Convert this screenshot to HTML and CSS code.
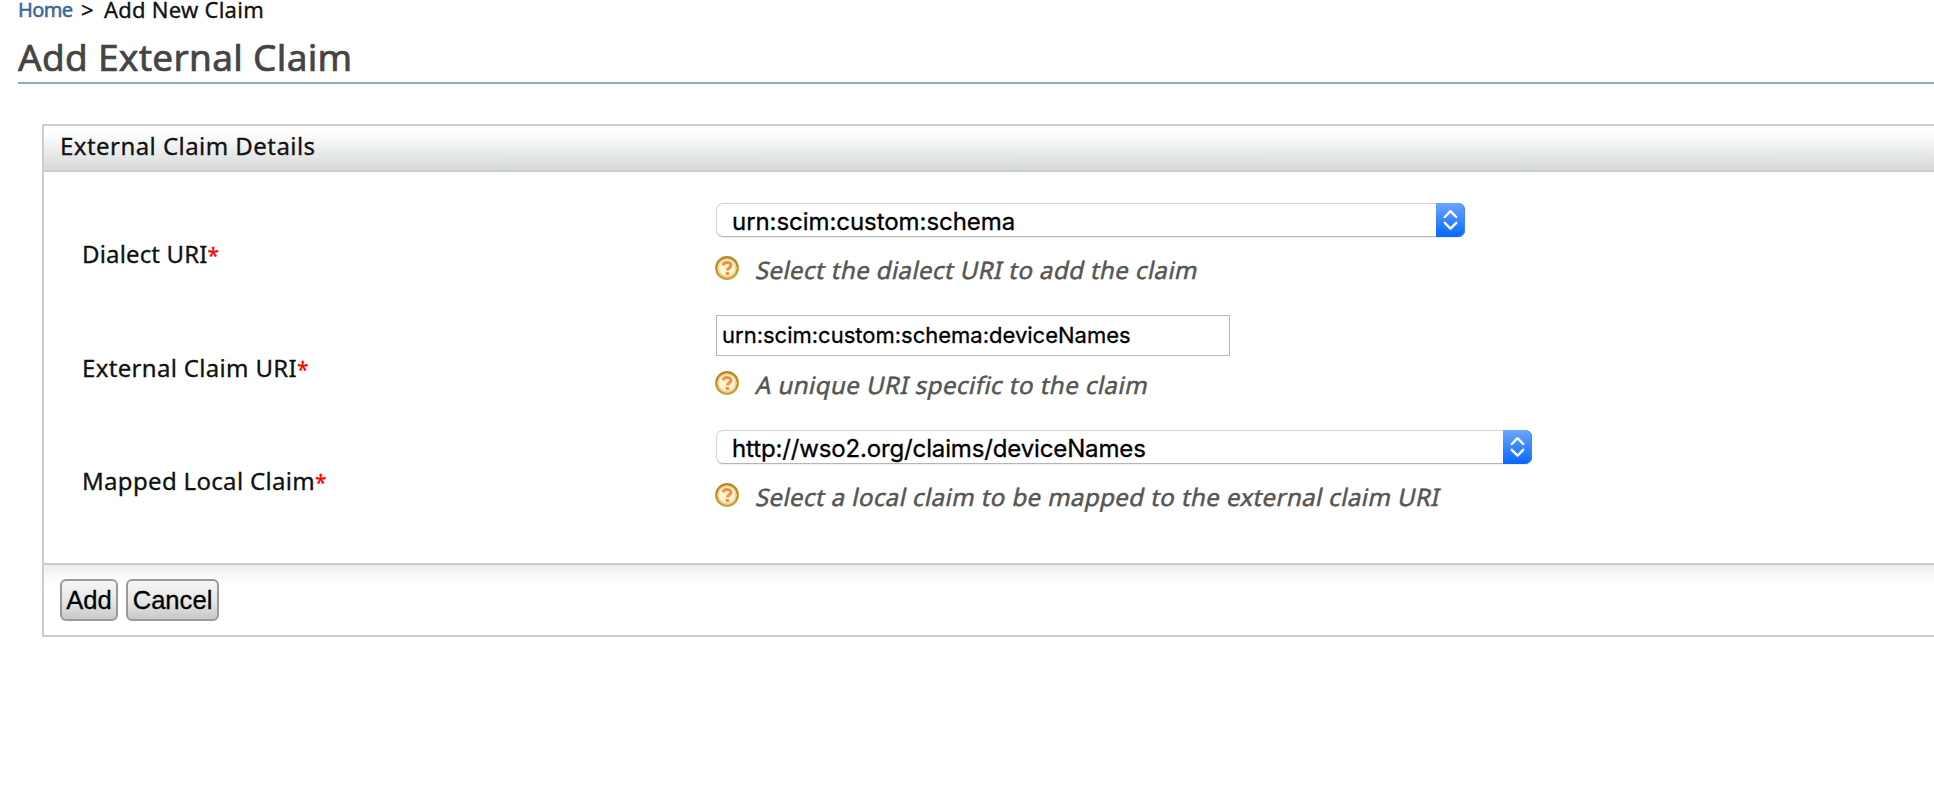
FILE: index.html
```html
<!DOCTYPE html>
<html lang="en">
<head>
<meta charset="utf-8">
<title>Add External Claim</title>
<link rel="stylesheet" href="styles.css">
</head>
<body>
<svg width="0" height="0" class="defs">
  <defs>
    <linearGradient id="ring" x1="0" y1="0" x2="0" y2="1"><stop offset="0" stop-color="#b08c2a"/><stop offset="1" stop-color="#cda03c"/></linearGradient>
    <symbol id="help" viewBox="0 0 24 24">
      <circle cx="12" cy="12" r="10.7" fill="#fcf5d4" stroke="url(#ring)" stroke-width="2.4"/>
      <circle cx="12" cy="12" r="8.8" fill="none" stroke="#ecd28a" stroke-width="1.4"/>
      <path d="M8.2 9.4C8.4 5.8 16 5.6 16 9.3C16 11.8 12.4 11.6 12.4 14.6" fill="none" stroke="#f18f45" stroke-width="3"/>
      <rect x="10.8" y="16" width="3.2" height="3" fill="#f18f45"/>
    </symbol>
    <symbol id="arrows" viewBox="0 0 29 34">
      <path d="M8.8 14L14.5 8.2L20.2 14M8.8 19.8L14.5 25.6L20.2 19.8" fill="none" stroke="#fff" stroke-width="2.4" stroke-linecap="round" stroke-linejoin="round"/>
    </symbol>
  </defs>
</svg>
<nav class="breadcrumb"><a class="home">Home</a><span class="sep">&gt;</span><span class="current">Add New Claim</span></nav>
<h1 class="title"><span>Add External Claim</span></h1>
<main class="panel">
  <h2 class="panel-head"><span class="head-text">External Claim Details</span></h2>
  <div class="panel-body">
    <div class="row row-dialect">
      <div class="label"><span class="l1">Dialect URI</span><span class="req">*</span></div>
      <div class="field">
        <div class="select select-dialect"><span class="value">urn:scim:custom:schema</span><span class="knob"><svg width="29" height="34"><use href="#arrows"/></svg></span></div>
        <div class="hint"><svg class="icon" width="24" height="24"><use href="#help"/></svg><span class="slant">Select the dialect URI to add the claim</span></div>
      </div>
    </div>
    <div class="row row-external">
      <div class="label"><span>External Claim URI</span><span class="req">*</span></div>
      <div class="field">
        <div class="textbox"><span>urn:scim:custom:schema:deviceNames</span></div>
        <div class="hint"><svg class="icon" width="24" height="24"><use href="#help"/></svg><span class="slant">A unique URI specific to the claim</span></div>
      </div>
    </div>
    <div class="row row-mapped">
      <div class="label"><span>Mapped Local Claim</span><span class="req">*</span></div>
      <div class="field">
        <div class="select select-mapped"><span class="value">http://wso2.org/claims/deviceNames</span><span class="knob"><svg width="29" height="34"><use href="#arrows"/></svg></span></div>
        <div class="hint"><svg class="icon" width="24" height="24"><use href="#help"/></svg><span class="slant">Select a local claim to be mapped to the external claim URI</span></div>
      </div>
    </div>
  </div>
  <div class="panel-foot"><button class="btn add">Add</button><button class="btn cancel">Cancel</button></div>
</main>
</body>
</html>
```

FILE: styles.css
```css
* { box-sizing: border-box; }
body { margin: 0; height: 796px; overflow: hidden; background: #fff; color: #111; font-family: "Noto Sans", sans-serif; white-space: nowrap; -webkit-text-stroke: 0.3px; }
.defs { display: block; height: 0; }
.breadcrumb { display: flex; height: 32px; padding-left: 18px; font-size: 22px; line-height: 19px; }
.home { width: 63px; color: #386698; font-size: 20px; letter-spacing: -0.6px; -webkit-text-stroke: 0.5px; }
.sep { width: 23px; }
.current { letter-spacing: 0.25px; }
.title { margin: 0 0 40px 18px; height: 52px; border-bottom: 2px solid #94a6c8; color: #444; font-size: 37px; font-weight: 400; line-height: 50px; letter-spacing: 0.3px; -webkit-text-stroke: 0.7px; }
.panel { margin-left: 42px; height: 513px; border: 2px solid #ccc; border-right: 0; }
.panel-head { margin: 0; height: 46px; padding-left: 16px; border-bottom: 2px solid #ccc; background: linear-gradient(#fff 15%, #d8dbdc 95%); font-size: 24px; font-weight: 400; line-height: 40px; letter-spacing: 0.45px; }
.panel-body { height: 391px; padding-top: 31px; }
.row { display: grid; grid-template-columns: 671px 1fr; }
.row-dialect { height: 112px; }
.row-external { height: 115px; }
.row-mapped { height: 133px; }
.label { padding: 37px 0 0 38px; font-size: 24px; line-height: 28px; letter-spacing: 0.32px; }
.l1 { letter-spacing: 0.15px; }
.row-external .label { padding-top: 39px; }
.req { color: #f00; font-size: 21px; }
.select { display: flex; justify-content: space-between; height: 34px; margin-left: 1px; border: 1px solid #d2d2d2; border-bottom-color: #b5b5b5; border-radius: 7px; box-shadow: 0 1px 1px #0001; color: #000; font: 24px/35px Inter, sans-serif; letter-spacing: -0.06px; }
.select-dialect { width: 749px; }
.select-mapped { width: 816px; letter-spacing: -0.14px; }
.value { padding-left: 15px; }
.knob { width: 29px; height: 34px; margin: -1px -1px 0 0; border-radius: 0 7px 7px 0; background: linear-gradient(#6da6fb, #0668ff); box-shadow: inset -1px 0 #3d86f4; }
.knob svg { display: block; }
.textbox { width: 514px; height: 41px; margin-left: 1px; padding-left: 5px; border: 1px solid #b8b8b8; color: #000; font: 22px/39px Inter, sans-serif; }
.hint { display: flex; height: 24px; margin-top: 19px; color: #555; font-size: 24px; line-height: 28px; letter-spacing: 0.43px; -webkit-text-stroke: 0.5px; }
.row-external .hint { margin-top: 15px; letter-spacing: 0.48px; }
.slant { display: inline-block; transform: skewX(-12deg); }
.icon { flex: none; margin-right: 18px; }
.panel-foot { display: flex; gap: 8px; height: 72px; padding: 14px 0 0 16px; border-top: 2px solid #ccc; background: linear-gradient(#ececec, #fafbfa 13px, #fff 24px); }
.btn { height: 42px; padding: 0; border: 2px solid #999; border-radius: 6px; background: linear-gradient(#f6f6f6, #e5e5e5 55%, #c8c8c8); color: #000; font: 25.6px/38px "Liberation Sans", Arial, sans-serif; }
.add { width: 58px; }
.cancel { width: 93px; }
```
